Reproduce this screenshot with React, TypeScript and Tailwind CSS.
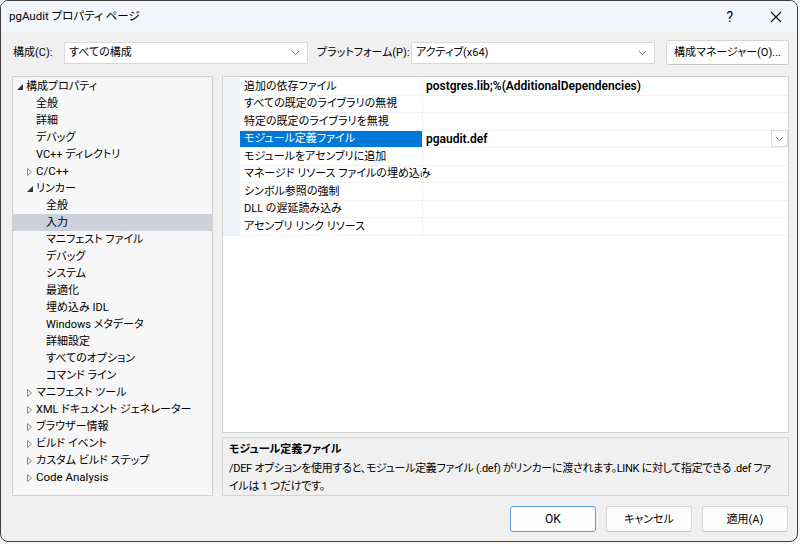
import React from "react";

const FONT =
  "font-['Roboto','Noto_Sans_CJK_JP',sans-serif] [font-feature-settings:'palt']";

type TreeItem = { label: string; level: number; toggle?: "open" | "closed"; selected?: boolean; latin?: boolean };

const TREE: TreeItem[] = [
  { label: "構成プロパティ", level: 0, toggle: "open" },
  { label: "全般", level: 1 },
  { label: "詳細", level: 1 },
  { label: "デバッグ", level: 1 },
  { label: "VC++ ディレクトリ", level: 1 },
  { label: "C/C++", level: 1, toggle: "closed", latin: true },
  { label: "リンカー", level: 1, toggle: "open" },
  { label: "全般", level: 2 },
  { label: "入力", level: 2, selected: true },
  { label: "マニフェスト ファイル", level: 2 },
  { label: "デバッグ", level: 2 },
  { label: "システム", level: 2 },
  { label: "最適化", level: 2 },
  { label: "埋め込み IDL", level: 2 },
  { label: "Windows メタデータ", level: 2 },
  { label: "詳細設定", level: 2 },
  { label: "すべてのオプション", level: 2 },
  { label: "コマンド ライン", level: 2 },
  { label: "マニフェスト ツール", level: 1, toggle: "closed" },
  { label: "XML ドキュメント ジェネレーター", level: 1, toggle: "closed" },
  { label: "ブラウザー情報", level: 1, toggle: "closed" },
  { label: "ビルド イベント", level: 1, toggle: "closed" },
  { label: "カスタム ビルド ステップ", level: 1, toggle: "closed" },
  { label: "Code Analysis", level: 1, toggle: "closed", latin: true },
];

const PROPS: { name: string; value?: string; selected?: boolean }[] = [
  { name: "追加の依存ファイル", value: "postgres.lib;%(AdditionalDependencies)" },
  { name: "すべての既定のライブラリの無視" },
  { name: "特定の既定のライブラリを無視" },
  { name: "モジュール定義ファイル", value: "pgaudit.def", selected: true },
  { name: "モジュールをアセンブリに追加" },
  { name: "マネージド リソース ファイルの埋め込み" },
  { name: "シンボル参照の強制" },
  { name: "DLL の遅延読み込み" },
  { name: "アセンブリ リンク リソース" },
];

function Chevron() {
  return (
    <svg width="9" height="6" viewBox="0 0 9 6" fill="none">
      <path d="M1 1l3.5 3.5L8 1" stroke="#7a7a7a" strokeWidth="1" />
    </svg>
  );
}

function Toggle({ kind }: { kind?: "open" | "closed" }) {
  return (
    <span className="flex w-[9px] shrink-0 items-center">
      {kind === "open" && (
        <svg width="6" height="6" viewBox="0 0 6 6">
          <path d="M6 0V6H0Z" fill="#333" />
        </svg>
      )}
      {kind === "closed" && (
        <svg width="5" height="8" viewBox="0 0 5 8">
          <path d="M0.5 0.5L4.5 4L0.5 7.5Z" fill="none" stroke="#888" strokeWidth="1" />
        </svg>
      )}
    </span>
  );
}

function Combo({ value }: { value: string }) {
  return (
    <div className="flex h-[22px] w-[244px] items-center justify-between border border-[#dadada] bg-white pl-[4px] pr-[7px]">
      <span>{value}</span>
      <Chevron />
    </div>
  );
}

function DlgButton({ label, primary }: { label: string; primary?: boolean }) {
  return (
    <div
      className={`flex h-[26px] w-[86px] items-center justify-center rounded-[3px] border bg-[#fdfdfd] ${
        primary ? "border-[#5e9ede] text-[12px]" : "border-[#d6d6d6] border-b-[#c4c4c4]"
      }`}
    >
      {label}
    </div>
  );
}

export default function App() {
  return (
    <div className={`h-[544px] w-[800px] whitespace-nowrap bg-[#f6f6f6] text-[11px] leading-none text-black ${FONT}`}>
      <div className="flex h-[542px] w-[798px] flex-col overflow-hidden rounded-[8px] border border-[#3f3f3f] bg-[#f0f0f0]">
        {/* title bar */}
        <div className="flex h-[31px] shrink-0 items-center bg-[#f3f6fa] pl-[8px]">
          <span className="text-[11.5px]">pgAudit プロパティ ページ</span>
          <span className="ml-auto mr-[37px] text-[14px]">?</span>
          <svg className="mr-[15px]" width="12" height="12" viewBox="0 0 12 12">
            <path d="M1 1l10 10M11 1L1 11" stroke="#111" strokeWidth="1.1" />
          </svg>
        </div>

        {/* configuration row */}
        <div className="mt-[8px] flex h-[25px] items-center pl-[12px]">
          <span className="w-[51px]">構成(C):</span>
          <Combo value="すべての構成" />
          <span className="ml-[9px] w-[94px]">プラットフォーム(P):</span>
          <Combo value="アクティブ(x64)" />
          <div className="ml-[11px] flex h-[25px] w-[123px] items-center justify-center rounded-[3px] border border-[#d6d6d6] border-b-[#c4c4c4] bg-[#fdfdfd]">
            構成マネージャー(O)...
          </div>
        </div>

        {/* main */}
        <div className="mt-[11px] flex h-[420px] pl-[11px]">
          {/* tree */}
          <div className="w-[201px] border border-[#d0d0d0] bg-[#f7f7f7] pt-[1px]">
            {TREE.map((t, i) => (
              <div
                key={i}
                className={`flex h-[17px] items-center ${t.selected ? "bg-[#cdd1dc]" : ""}`}
                style={{ paddingLeft: 4 + t.level * 10 }}
              >
                <Toggle kind={t.toggle} />
                <span className={t.latin ? "text-[11.5px]" : ""}>{t.label}</span>
              </div>
            ))}
          </div>

          {/* right side */}
          <div className="ml-[9px] flex w-[567px] flex-col">
            <div className="flex h-[357px] border border-[#d0d0d0] bg-white pt-[1px]">
              <div className="w-[17px] shrink-0 self-start bg-[#eff3f9]" style={{ height: 9 * 17.5 }} />
              <div className="flex-1">
                {PROPS.map((p, i) => (
                  <div key={i} className="flex h-[17.5px] border-b border-[#f2f2f2]">
                    <div
                      className={`flex w-[182px] items-center pl-[4px] ${
                        p.selected ? "bg-[#0078d7] text-white" : ""
                      }`}
                    >
                      {p.name}
                    </div>
                    <div className="flex flex-1 items-center border-l border-[#f2f2f2] pl-[3px] text-[12px] font-semibold">
                      {p.value}
                      {p.selected && (
                        <div className="ml-auto flex h-[17px] w-[17px] items-center justify-center border border-[#dcdcdc] bg-white font-normal">
                          <Chevron />
                        </div>
                      )}
                    </div>
                  </div>
                ))}
              </div>
            </div>

            <div className="mt-[4px] h-[59px] border border-[#d4d4d4] bg-[#f0f0f0] px-[6px] pt-[6px]">
              <div className="font-bold">モジュール定義ファイル</div>
              <div className="mt-[5px] leading-[18px] tracking-[-0.3px]">
                /DEF オプションを使用すると、モジュール定義ファイル (.def) がリンカーに渡されます。LINK に対して指定できる .def ファ
                <br />
                イルは 1 つだけです。
              </div>
            </div>
          </div>
        </div>

        {/* buttons */}
        <div className="mt-[10px] flex justify-end gap-[10px] pr-[9px]">
          <DlgButton label="OK" primary />
          <DlgButton label="キャンセル" />
          <DlgButton label="適用(A)" />
        </div>
      </div>
    </div>
  );
}
